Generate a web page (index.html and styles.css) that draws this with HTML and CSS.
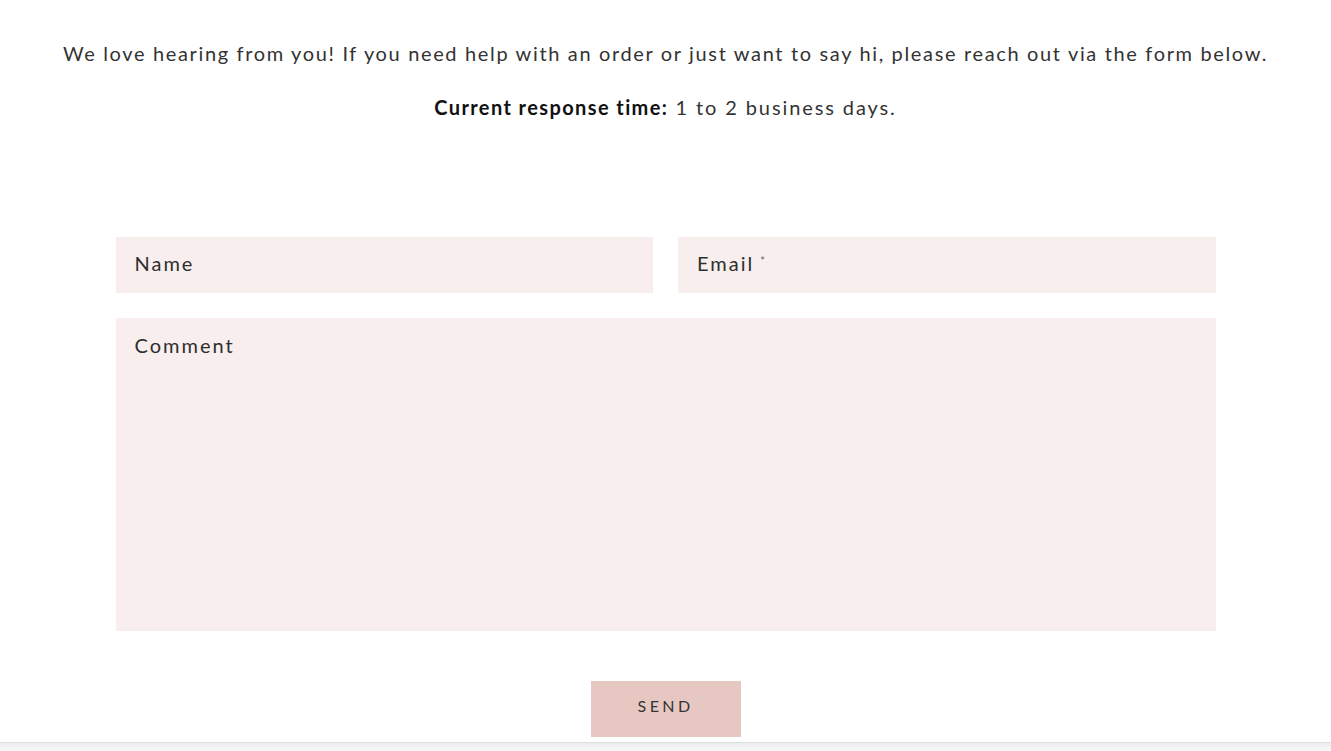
FILE: index.html
```html
<!DOCTYPE html>
<html lang="en">
<head>
    <meta charset="UTF-8">
    <title>Contact</title>
    <link rel="stylesheet" href="styles.css">
</head>
<body>
    <div class="intro">
        <p>We love hearing from you! If you need help with an order or just want to say hi, please reach out via the form below.</p>
        <p><b>Current response time:</b> 1 to 2 business days.</p>
    </div>

    <form class="contact-form">
        <div class="row">
            <input type="text" placeholder="Name">
            <div class="field">
                <input type="email">
                <span class="ph">Email <sup>*</sup></span>
            </div>
        </div>
        <textarea placeholder="Comment"></textarea>
        <div class="actions">
            <button type="button">Send</button>
        </div>
    </form>

    <div class="footer-edge"></div>
</body>
</html>
```

FILE: styles.css
```css
body {
    margin: 0;
    font-family: 'Lato', 'Open Sans', sans-serif;
    color: #333;
    background: #fff;
}

.intro {
    text-align: center;
    padding-top: 39px;
}

.intro p {
    margin: 0 0 26px 0;
    font-size: 20px;
    line-height: 28px;
    letter-spacing: 1.65px;
}

.intro p + p {
    letter-spacing: 1.9px;
}

.intro b {
    color: #111;
    font-weight: bold;
    letter-spacing: 1.4px;
}

.contact-form {
    width: 1100px;
    margin: 116px auto 0 auto;
}

.row {
    display: grid;
    grid-template-columns: 1fr 1fr;
    gap: 25px;
    margin-bottom: 25px;
}

.field {
    position: relative;
}

input, textarea {
    display: block;
    width: 100%;
    box-sizing: border-box;
    border: none;
    background: #f7eeed;
    font-family: inherit;
    font-size: 20px;
    letter-spacing: 2px;
    color: #333;
    padding: 0 19px;
    outline: none;
}

input {
    height: 56px;
    padding-bottom: 4px;
}

textarea {
    height: 313px;
    padding-top: 15px;
    resize: none;
}

::placeholder {
    color: #2e2e2e;
    opacity: 1;
}

.ph {
    position: absolute;
    left: 19px;
    top: 0;
    height: 52px;
    display: flex;
    align-items: center;
    gap: 6px;
    font-size: 20px;
    letter-spacing: 2px;
    color: #2e2e2e;
    pointer-events: none;
}

.ph sup {
    font-size: 11px;
    color: #666;
    align-self: flex-start;
    margin-top: 17px;
}

.actions {
    text-align: center;
    margin-top: 50px;
}

button {
    width: 150px;
    height: 56px;
    border: none;
    padding: 0 0 8px 0;
    background: #e6c7c1;
    color: #333;
    font-family: inherit;
    font-size: 16px;
    letter-spacing: 3.4px;
    text-transform: uppercase;
    cursor: pointer;
}

.footer-edge {
    position: fixed;
    left: 0;
    right: 0;
    bottom: 0;
    height: 8px;
    border-top: 1px solid #dedede;
    background: linear-gradient(to bottom, #ececec, #fafafa);
}
```
